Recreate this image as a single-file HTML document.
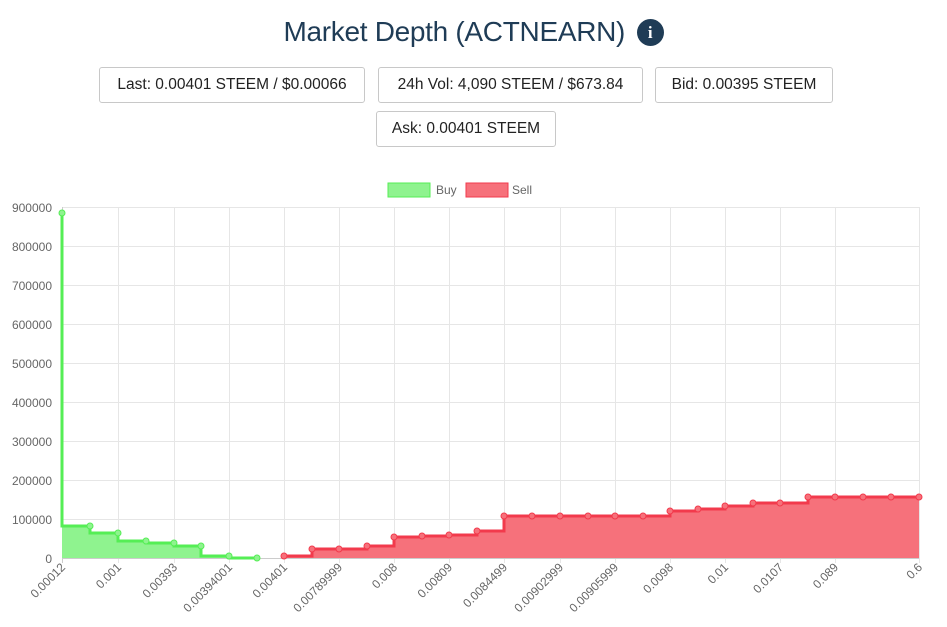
<!DOCTYPE html>
<html><head><meta charset="utf-8"><style>
body{margin:0;width:947px;height:627px;background:#fff;font-family:"Liberation Sans",sans-serif;overflow:hidden;position:relative}
h1{position:absolute;top:16px;left:0;width:947px;text-align:center;margin:0;font-weight:normal;font-size:28px;color:#1f3c56;letter-spacing:-0.3px}
.info{display:inline-block;width:27px;height:27px;border-radius:50%;background:#1f3c56;color:#fff;font:bold 17px "Liberation Serif",serif;line-height:27px;text-align:center;vertical-align:3px;margin-left:4px}
.b{position:absolute;height:36px;border:1px solid #c8c8c8;border-radius:3px;box-sizing:border-box;font-size:15.5px;color:#222;line-height:34px;text-align:center}
</style></head><body>
<h1>Market Depth (ACTNEARN) <span class="info">i</span></h1>
<div class="b" style="left:99px;top:67px;width:266px">Last: 0.00401 STEEM / $0.00066</div>
<div class="b" style="left:378px;top:67px;width:265px">24h Vol: 4,090 STEEM / $673.84</div>
<div class="b" style="left:655px;top:67px;width:178px">Bid: 0.00395 STEEM</div>
<div class="b" style="left:376px;top:111px;width:180px">Ask: 0.00401 STEEM</div>
<svg width="947" height="627" style="position:absolute;left:0;top:0" font-family="Liberation Sans,sans-serif" font-size="12" fill="#666">
<rect x="388" y="183" width="42" height="14" fill="#8ff38f" stroke="#55ee55" stroke-width="1"/>
<text x="436" y="194">Buy</text>
<rect x="466" y="183" width="42" height="14" fill="#f6717b" stroke="#f23a4c" stroke-width="1"/>
<text x="512" y="194">Sell</text>
<g stroke="#e6e6e6" stroke-width="1">
<line x1="62" x2="919" y1="207.5" y2="207.5"/><line x1="62" x2="919" y1="246.5" y2="246.5"/><line x1="62" x2="919" y1="285.5" y2="285.5"/><line x1="62" x2="919" y1="324.5" y2="324.5"/><line x1="62" x2="919" y1="363.5" y2="363.5"/><line x1="62" x2="919" y1="402.5" y2="402.5"/><line x1="62" x2="919" y1="441.5" y2="441.5"/><line x1="62" x2="919" y1="480.5" y2="480.5"/><line x1="62" x2="919" y1="519.5" y2="519.5"/>
<line x1="118.5" x2="118.5" y1="207" y2="563"/><line x1="174.5" x2="174.5" y1="207" y2="563"/><line x1="229.5" x2="229.5" y1="207" y2="563"/><line x1="284.5" x2="284.5" y1="207" y2="563"/><line x1="339.5" x2="339.5" y1="207" y2="563"/><line x1="394.5" x2="394.5" y1="207" y2="563"/><line x1="449.5" x2="449.5" y1="207" y2="563"/><line x1="504.5" x2="504.5" y1="207" y2="563"/><line x1="560.5" x2="560.5" y1="207" y2="563"/><line x1="615.5" x2="615.5" y1="207" y2="563"/><line x1="670.5" x2="670.5" y1="207" y2="563"/><line x1="725.5" x2="725.5" y1="207" y2="563"/><line x1="780.5" x2="780.5" y1="207" y2="563"/><line x1="835.5" x2="835.5" y1="207" y2="563"/><line x1="919.5" x2="919.5" y1="207" y2="563"/>
</g>
<line x1="62" x2="919" y1="558.5" y2="558.5" stroke="#ccc"/>
<line x1="62.5" x2="62.5" y1="207" y2="563" stroke="#ccc"/>
<g text-anchor="end">
<text x="52" y="212">900000</text><text x="52" y="251">800000</text><text x="52" y="290">700000</text><text x="52" y="329">600000</text><text x="52" y="368">500000</text><text x="52" y="407">400000</text><text x="52" y="446">300000</text><text x="52" y="485">200000</text><text x="52" y="524">100000</text><text x="52" y="563">0</text>
</g>
<path d="M62,213 V526 H90 V533 H118 V541 H146 V543 H174 V546 H201 V556 H229 V558 H257 V558 H62 Z" fill="#8ff38f"/>
<path d="M62,213 V526 H90 V533 H118 V541 H146 V543 H174 V546 H201 V556 H229 V558 H257" fill="none" stroke="#55ee55" stroke-width="3"/>
<path d="M284,556 H312 V549 H367 V546 H394 V537 H422 V536 H449 V535 H477 V531 H504 V516 H670 V511 H698 V509 H725 V506 H753 V503 H808 V497 H919 V558 H284 Z" fill="#f6717b"/>
<path d="M284,556 H312 V549 H367 V546 H394 V537 H422 V536 H449 V535 H477 V531 H504 V516 H670 V511 H698 V509 H725 V506 H753 V503 H808 V497 H919" fill="none" stroke="#f23a4c" stroke-width="3"/>
<g fill="#8ff38f" stroke="#55ee55" stroke-width="1">
<circle cx="62" cy="213" r="3"/><circle cx="90" cy="526" r="3"/><circle cx="118" cy="533" r="3"/><circle cx="146" cy="541" r="3"/><circle cx="174" cy="543" r="3"/><circle cx="201" cy="546" r="3"/><circle cx="229" cy="556" r="3"/><circle cx="257" cy="558" r="3"/>
</g>
<g fill="#f6717b" stroke="#f23a4c" stroke-width="1">
<circle cx="284" cy="556" r="3"/><circle cx="312" cy="549" r="3"/><circle cx="339" cy="549" r="3"/><circle cx="367" cy="546" r="3"/><circle cx="394" cy="537" r="3"/><circle cx="422" cy="536" r="3"/><circle cx="449" cy="535" r="3"/><circle cx="477" cy="531" r="3"/><circle cx="504" cy="516" r="3"/><circle cx="532" cy="516" r="3"/><circle cx="560" cy="516" r="3"/><circle cx="588" cy="516" r="3"/><circle cx="615" cy="516" r="3"/><circle cx="643" cy="516" r="3"/><circle cx="670" cy="511" r="3"/><circle cx="698" cy="509" r="3"/><circle cx="725" cy="506" r="3"/><circle cx="753" cy="503" r="3"/><circle cx="780" cy="503" r="3"/><circle cx="808" cy="497" r="3"/><circle cx="835" cy="497" r="3"/><circle cx="863" cy="497" r="3"/><circle cx="891" cy="497" r="3"/><circle cx="919" cy="497" r="3"/>
</g>
<g text-anchor="end">
<text transform="translate(66,568) rotate(-45)">0.00012</text>
<text transform="translate(122,568) rotate(-45)">0.001</text>
<text transform="translate(178,568) rotate(-45)">0.00393</text>
<text transform="translate(233,568) rotate(-45)">0.00394001</text>
<text transform="translate(288,568) rotate(-45)">0.00401</text>
<text transform="translate(343,568) rotate(-45)">0.00789999</text>
<text transform="translate(398,568) rotate(-45)">0.008</text>
<text transform="translate(453,568) rotate(-45)">0.00809</text>
<text transform="translate(508,568) rotate(-45)">0.0084499</text>
<text transform="translate(564,568) rotate(-45)">0.00902999</text>
<text transform="translate(619,568) rotate(-45)">0.00905999</text>
<text transform="translate(674,568) rotate(-45)">0.0098</text>
<text transform="translate(729,568) rotate(-45)">0.01</text>
<text transform="translate(784,568) rotate(-45)">0.0107</text>
<text transform="translate(839,568) rotate(-45)">0.089</text>
<text transform="translate(923,568) rotate(-45)">0.6</text>
</g>
</svg>
</body></html>
